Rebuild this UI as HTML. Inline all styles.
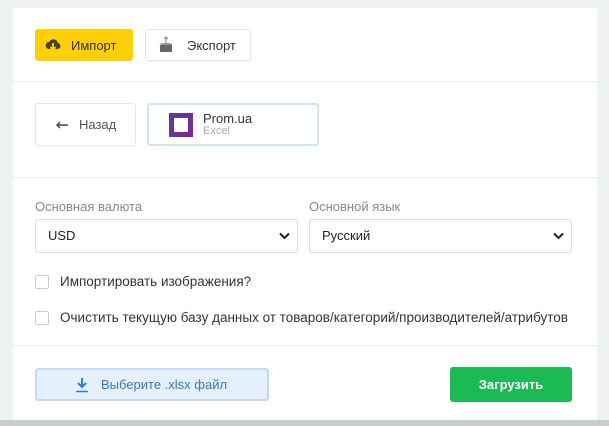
<!DOCTYPE html>
<html><head><meta charset="utf-8"><style>
*{box-sizing:border-box;margin:0;padding:0}
body{width:609px;height:426px;background:#eef2f3;font-family:"Liberation Sans","DejaVu Sans",sans-serif;position:relative;overflow:hidden;font-size:13px;color:#333}
.card{position:absolute;left:13px;top:8px;width:584px;height:413px;background:#fff}
.bottom{position:absolute;left:0;top:420px;width:609px;height:6px;background:#c6cdcd}
.hr{position:absolute;left:13px;width:584px;height:1px;background:#e8ecec}
.btn{position:absolute;border-radius:3px;display:flex;align-items:center}
.sel{position:absolute;top:219px;height:34px;border:1px solid #ddd;border-radius:3px;padding-left:12px;line-height:32px;font-size:13px;color:#222}
.sel svg{position:absolute;right:7px;top:12px}
.lbl{position:absolute;top:199px;color:#888;font-size:13px}
.cb{position:absolute;left:35px;width:14px;height:14px;border:1px solid #ccc;border-radius:2px}
.ct{position:absolute;left:60px;font-size:13.5px;color:#333}
</style></head><body>
<div class="card"></div>
<div class="bottom"></div>
<div class="btn" style="left:35px;top:29px;width:98px;height:32px;background:#ffd00a">
<svg style="margin-left:10px" width="16" height="16" viewBox="0 0 16 16"><path d="M4 12a3.5 3.5 0 0 1 .3-7A4.5 4.5 0 0 1 12.8 6 3 3 0 0 1 12 12z" fill="#4a4030"/><path d="M8 6v6M5.5 10l2.5 3 2.5-3" stroke="#ffd00a" stroke-width="1.8" fill="none"/></svg>
<span style="margin-left:10px;color:#3a3320;font-size:13px">Импорт</span></div>
<div class="btn" style="left:145px;top:29px;width:106px;height:32px;background:#fff;border:1px solid #e6e6e6;box-shadow:0 1px 2px rgba(0,0,0,.06)">
<svg style="margin-left:12px" width="16" height="18" viewBox="0 0 16 18"><path d="M8 1v7M6 3l2-2 2 2" stroke="#999" stroke-width="1.3" fill="none"/><path d="M2 9h12v7H2z" fill="#666"/><path d="M1 9l3-2h8l3 2z" fill="#999"/></svg>
<span style="margin-left:13px;color:#333">Экспорт</span></div>
<div class="hr" style="top:81px"></div>
<div class="btn" style="left:35px;top:103px;width:101px;height:43px;background:#fff;border:1px solid #e6e6e6;box-shadow:0 1px 2px rgba(0,0,0,.05)">
<svg style="margin-left:19px" width="14" height="8" viewBox="0 0 14 8"><path d="M13 4H2M5 1L2 4l3 3" stroke="#444" stroke-width="1.4" fill="none"/></svg><span style="margin-left:10px;color:#555">Назад</span></div>
<div class="btn" style="left:147px;top:103px;width:172px;height:43px;background:#fff;border:2px solid #cfeadb">
<div style="margin-left:20px;width:24px;height:24px;background:linear-gradient(135deg,#5b3aa0,#7a2a90);position:relative"><div style="position:absolute;left:5px;top:5px;width:14px;height:14px;background:#fff"></div></div>
<div style="margin-left:10px;line-height:12px"><div style="font-size:13px;color:#333">Prom.ua</div><div style="font-size:11px;color:#aaa">Excel</div></div></div>
<div class="hr" style="top:177px"></div>
<div class="lbl" style="left:35px">Основная валюта</div>
<div class="lbl" style="left:309px">Основной язык</div>
<div class="sel" style="left:35px;width:263px">USD<svg width="11" height="8" viewBox="0 0 11 8"><path d="M1 1.5l4.5 4.5 4.5-4.5" stroke="#222" stroke-width="2" fill="none"/></svg></div>
<div class="sel" style="left:309px;width:263px">Русский<svg width="11" height="8" viewBox="0 0 11 8"><path d="M1 1.5l4.5 4.5 4.5-4.5" stroke="#222" stroke-width="2" fill="none"/></svg></div>
<div class="cb" style="top:275px"></div><div class="ct" style="top:274px">Импортировать изображения?</div>
<div class="cb" style="top:311px"></div><div class="ct" style="top:310px">Очистить текущую базу данных от товаров/категорий/производителей/атрибутов</div>
<div class="hr" style="top:345px"></div>
<div class="btn" style="left:35px;top:368px;width:234px;height:33px;background:#e4f0fc;border:2px solid #c5daf0">
<svg style="margin-left:38px" width="14" height="16" viewBox="0 0 14 16"><path d="M7 1v9M3 6l4 4 4-4" stroke="#2f7fd0" stroke-width="2" fill="none"/><path d="M1 14.5h12" stroke="#2f7fd0" stroke-width="1.5"/></svg>
<span style="margin-left:12px;color:#3a78c0;font-size:13px">Выберите .xlsx файл</span></div>
<div class="btn" style="left:450px;top:367px;width:122px;height:35px;background:#1db954;justify-content:center;color:#fff;font-weight:bold;font-size:13px">Загрузить</div>
</body></html>
